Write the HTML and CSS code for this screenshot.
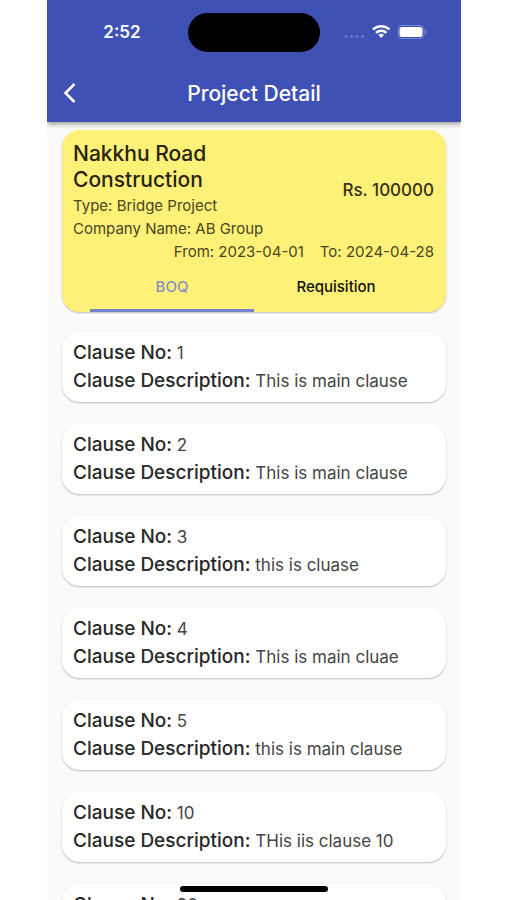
FILE: index.html
```html
<!DOCTYPE html>
<html lang="en">
<head>
<meta charset="utf-8">
<meta name="viewport" content="width=device-width, initial-scale=1">
<title>Project Detail</title>
<link rel="stylesheet" href="styles.css">
</head>
<body>
<div class="phone">
  <header class="app-bar">
    <div class="status">
      <span class="time">2:52</span>
      <span class="island"></span>
      <span class="indicators">
        <svg width="84" height="16" viewBox="0 0 84 16" aria-hidden="true">
          <g fill="#6b79c8"><circle cx="3" cy="12.500" r="1.600"/><circle cx="8.500" cy="12.500" r="1.600"/><circle cx="14" cy="12.500" r="1.600"/><circle cx="19.500" cy="12.500" r="1.600"/></g>
          <g fill="none" stroke="#fff" stroke-width="2.400"><path d="M30 5.500a11.800 11.800 0 0 1 16.400 0"/><path d="M33 8.900a7.400 7.400 0 0 1 10.400 0"/></g>
          <path d="M35.400 11.100a4.200 4.200 0 0 1 5.600 0L38.200 14z" fill="#fff"/>
          <rect x="55" y="1.500" width="26" height="13" rx="4" fill="none" stroke="#7c88cf"/>
          <rect x="56.500" y="3" width="23" height="10" rx="2.800" fill="#fff"/>
          <path d="M82.200 5.800c2 .8 2 3.600 0 4.400z" fill="#7c88cf"/>
        </svg>
      </span>
    </div>
    <div class="toolbar">
      <button class="back" type="button" aria-label="Back">
        <svg width="14" height="22" viewBox="0 0 14 22" aria-hidden="true"><path d="M11.500 2 2.500 11l9 9" fill="none" stroke="#fff" stroke-width="2.600"/></svg>
      </button>
      <h1>Project Detail</h1>
    </div>
  </header>
  <main class="content">
    <section class="project">
      <div class="summary">
        <div class="info">
          <h2>Nakkhu Road Construction</h2>
          <p>Type: Bridge Project</p>
          <p>Company Name: AB Group</p>
        </div>
        <strong class="amount">Rs. 100000</strong>
      </div>
      <div class="dates"><span>From: 2023-04-01</span><span>To: 2024-04-28</span></div>
      <div class="tabs" role="tablist">
        <button class="tab active" type="button" role="tab" aria-selected="true">BOQ</button>
        <button class="tab" type="button" role="tab" aria-selected="false">Requisition</button>
      </div>
    </section>
    <ul class="clauses">
      <li><p><b>Clause No:</b> 1</p><p><b>Clause Description:</b> This is main clause</p></li>
      <li><p><b>Clause No:</b> 2</p><p><b>Clause Description:</b> This is main clause</p></li>
      <li><p><b>Clause No:</b> 3</p><p><b>Clause Description:</b> this is cluase</p></li>
      <li><p><b>Clause No:</b> 4</p><p><b>Clause Description:</b> This is main cluae</p></li>
      <li><p><b>Clause No:</b> 5</p><p><b>Clause Description:</b> this is main clause</p></li>
      <li><p><b>Clause No:</b> 10</p><p><b>Clause Description:</b> THis iis clause 10</p></li>
      <li><p><b>Clause No:</b> 20</p></li>
    </ul>
  </main>
  <div class="home-bar"></div>
</div>
</body>
</html>
```
FILE: styles.css
```css
* { box-sizing: border-box; }
body, h1, h2, p, ul { margin: 0; padding: 0; }
body { background: #fff; font-family: Inter, "Liberation Sans", sans-serif; color: #282828; padding: 0 46px 0 47px; }
button { font: inherit; border: 0; background: none; padding: 0; }
.phone { position: relative; height: 100vh; overflow: hidden; background: #fafafa; display: flex; flex-direction: column; }
.app-bar { position: relative; flex: none; background: #3f51b5; color: #fff; box-shadow: 0 2px 5px rgba(0, 0, 0, .4); }
.status { display: grid; grid-template-columns: 1fr 132px 1fr; align-items: center; height: 64px; }
.time { font-size: 17px; font-weight: 600; text-align: center; padding-left: 9px; }
.island { height: 39px; border-radius: 20px; background: #000; }
.indicators { display: flex; justify-content: center; padding-right: 11px; }
.toolbar { display: grid; grid-template-columns: 56px 1fr 56px; align-items: center; height: 58px; }
.back { display: flex; align-items: center; height: 48px; padding-left: 16px; }
h1 { font-size: 21px; font-weight: 500; text-align: center; }
.content { flex: 1; padding: 8px 15px 0; }
.project { background: #fff077; border-radius: 18px; box-shadow: 0 1px 2px rgba(0, 0, 0, .25); overflow: hidden; color: #4a4523; font-size: 15px; line-height: 23px; }
.summary { display: flex; justify-content: space-between; align-items: center; padding: 11px 12px 0 11px; }
.info { flex: 0 1 200px; }
h2 { margin-bottom: 1px; font-size: 21px; line-height: 26px; font-weight: 500; color: #272410; }
.amount { font-size: 17px; font-weight: 500; color: #36321a; }
.dates { display: flex; justify-content: flex-end; gap: 16px; padding: 0 12px; }
.tabs { display: flex; padding: 0 28px; height: 49px; }
.tab { flex: 1; font-size: 15px; font-weight: 500; color: #111; border-bottom: 3px solid transparent; }
.tab.active { color: #8a8fc2; border-bottom-color: #7783cc; }
.clauses { list-style: none; display: flex; flex-direction: column; gap: 22px; padding-top: 20px; }
.clauses li { background: #fff; border-radius: 18px; box-shadow: 0 1px 2px rgba(0, 0, 0, .25); padding: 7px 11px; font-size: 17px; line-height: 28px; color: #444; }
.clauses b { font-size: 19px; font-weight: 500; color: #282828; }
.home-bar { position: absolute; left: 50%; bottom: 8px; width: 148px; height: 6px; margin-left: -74px; border-radius: 3px; background: #000; }
```
